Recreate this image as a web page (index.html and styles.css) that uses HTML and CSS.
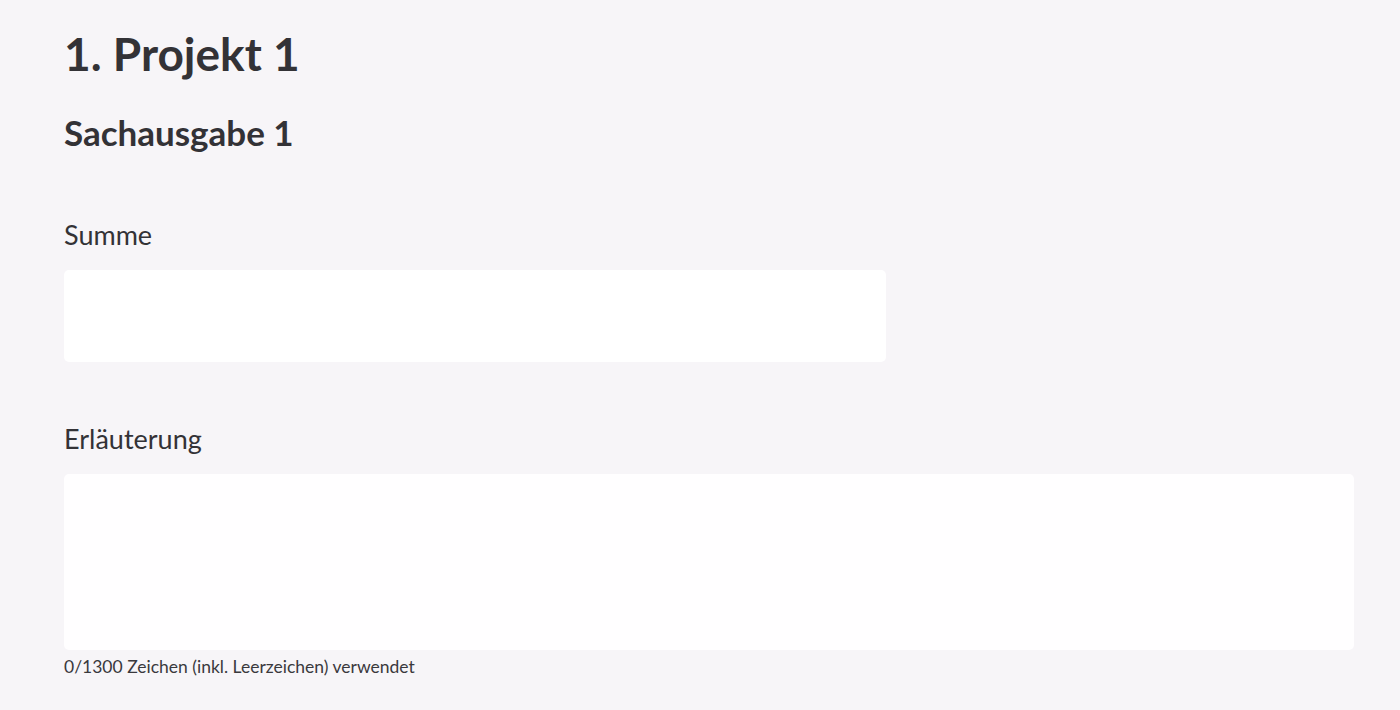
FILE: index.html
```html
<!DOCTYPE html>
<html lang="de">
<head>
<meta charset="utf-8">
<title>Projekt 1</title>
<link rel="stylesheet" href="styles.css">
</head>
<body>
<main class="page">
  <h1 class="title">1. Projekt 1</h1>
  <h2 class="subtitle">Sachausgabe 1</h2>
  <div class="field">
    <label class="label" for="summe">Summe</label>
    <input class="input" id="summe" type="text">
  </div>
  <div class="field field-text">
    <label class="label" for="erl">Erläuterung</label>
    <textarea class="textarea" id="erl"></textarea>
    <div class="counter">0/1300 Zeichen (inkl. Leerzeichen) verwendet</div>
  </div>
</main>
</body>
</html>
```
FILE: styles.css
```css
html, body {
  margin: 0;
  padding: 0;
  background: #f7f5f8;
}
body {
  font-family: Lato, "Liberation Sans", sans-serif;
  color: #333236;
}
.page {
  padding: 24px 46px 0 64px;
  display: flex;
  flex-direction: column;
}
.title {
  font-size: 46px;
  font-weight: 700;
  line-height: 60px;
  margin: 0;
}
.subtitle {
  font-size: 35px;
  font-weight: 700;
  line-height: 44px;
  margin: 26px 0 0 0;
}
.field {
  display: flex;
  flex-direction: column;
  margin-top: 65px;
}
.field-text {
  margin-top: 61px;
}
.label {
  font-size: 27px;
  line-height: 32px;
  margin-bottom: 19px;
}
.input {
  width: 822px;
  height: 92px;
  border: none;
  border-radius: 5px;
  background: #ffffff;
  box-sizing: border-box;
}
.textarea {
  width: 100%;
  height: 176px;
  border: none;
  border-radius: 5px;
  background: #fffeff;
  box-sizing: border-box;
  resize: none;
  display: block;
}
.counter {
  font-size: 17.5px;
  line-height: 22px;
  margin-top: 6px;
  color: #3a393d;
}
```
